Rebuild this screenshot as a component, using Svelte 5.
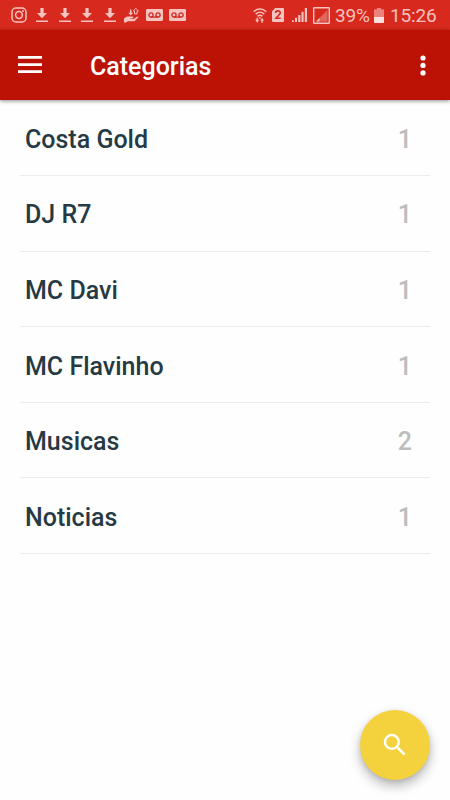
<script>
  const categories = [
    { name: 'Costa Gold', count: 1 },
    { name: 'DJ R7', count: 1 },
    { name: 'MC Davi', count: 1 },
    { name: 'MC Flavinho', count: 1 },
    { name: 'Musicas', count: 2 },
    { name: 'Noticias', count: 1 }
  ];
</script>

<div class="screen">
  <div class="status">
    <div class="notifications">
      <svg class="insta" width="16" height="16" viewBox="0 0 16 16">
        <g fill="none" stroke="currentColor" stroke-width="1.5">
          <rect x="1" y="1" width="14" height="14" rx="4" />
          <circle cx="8" cy="8" r="3.4" />
        </g>
        <circle cx="12" cy="4" r="1" fill="currentColor" />
      </svg>
      {#each [0, 1, 2, 3] as n (n)}
        <svg class="download" width="12" height="14" viewBox="0 0 12 14">
          <path fill="currentColor" d="M4.4 0h3.2v5H11L6 10.3 1 5h3.4zM0 12.4h12V14H0z" />
        </svg>
      {/each}
      <svg class="hand" width="16" height="16" viewBox="0 0 16 16">
        <path fill="currentColor" d="M0 11.4l3-1.8h5.5l1 1-1 1H6.2v.5h3.4L13.3 9.6l1.1.6-4 4H4l-2.2 1.2H0zM5.9 2.6h1.5v3.2h1.8L6.7 8.6 4.2 5.8h1.7z" />
        <path fill="none" stroke="currentColor" stroke-width="1" d="M11.8 1.3l2.6 2.8h-1.3v2.8h-2.6V4.1H9.3z" />
      </svg>
      {#each [0, 1] as n (n)}
        <svg class="voicemail" width="17" height="12" viewBox="0 0 17 12">
          <rect width="17" height="12" rx="1.2" fill="currentColor" />
          <g fill="none" stroke="#c92a20" stroke-width="1.3">
            <circle cx="5" cy="6" r="2.1" />
            <circle cx="12" cy="6" r="2.1" />
            <path d="M5 8.1h7" />
          </g>
        </svg>
      {/each}
    </div>
    <div class="system">
      <svg class="wifi" width="14" height="15" viewBox="0 0 14 15">
        <g fill="none" stroke="currentColor" stroke-width="1.5">
          <path d="M.8 3.8c3.5-3.6 8.9-3.6 12.4 0M2.7 6.2c2.5-2.5 6.1-2.5 8.6 0M4.6 8.4c1.4-1.4 3.4-1.4 4.8 0" />
        </g>
        <path fill="currentColor" d="M7 8.7l1.2 1.2L7 11.1 5.8 9.9zM3.5 9.8h1.4v2h1.3l-2 2.9-2-2.9h1.3zM9.8 14.7H8.4v-2.2H7.1l2-2.6 2 2.6H9.8z" />
      </svg>
      <svg class="sim" width="12" height="14" viewBox="0 0 12 14">
        <path fill="currentColor" d="M3.2 0H11a1 1 0 0 1 1 1v12a1 1 0 0 1-1 1H1a1 1 0 0 1-1-1V3.2z" />
        <path fill="none" stroke="#d7291d" stroke-width="1.6" d="M3.6 5c0-2.8 4.7-2.8 4.7-.2 0 1.9-3 3.4-4.4 5.5h4.8" />
      </svg>
      <svg class="signal" width="15" height="14" viewBox="0 0 15 14">
        <path fill="currentColor" d="M0 12.2h1.8V14H0zM3 9.8h2V14H3zM6.2 7h2.2v7H6.2zM9.5 3.7h2.1V14H9.5zM12.8 0H15v14h-2.2z" />
      </svg>
      <svg class="nosim" width="17" height="17" viewBox="0 0 17 17">
        <rect x=".7" y=".7" width="15.6" height="15.6" rx=".5" fill="none" stroke="currentColor" stroke-width="1.4" />
        <path fill="currentColor" opacity=".4" d="M14.5 3v11.5H3z" />
        <path fill="currentColor" d="M3 14.5l3.5-3.5v3.5z" />
      </svg>
      <span class="percent">39%</span>
      <svg class="battery" width="10" height="15" viewBox="0 0 10 15">
        <path fill="#eb837c" d="M3 0h4v1.2h2.2q.8 0 .8.8v7H0V2q0-.8.8-.8H3z" />
        <path fill="#fbe0de" d="M0 9h10v5.2q0 .8-.8.8H.8q-.8 0-.8-.8z" />
      </svg>
      <span class="clock">15:26</span>
    </div>
  </div>

  <header>
    <button class="menu" aria-label="Menu">
      <svg width="24" height="18" viewBox="0 0 24 18">
        <path fill="#fff" d="M0 .1h24v2.7H0zM0 7.3h24V10H0zM0 14.3h24V17H0z" />
      </svg>
    </button>
    <h1>Categorias</h1>
    <button class="more" aria-label="Mais">
      <svg width="6" height="21" viewBox="0 0 6 21">
        <g fill="#fff">
          <circle cx="3" cy="3" r="2.6" />
          <circle cx="3" cy="10.4" r="2.6" />
          <circle cx="3" cy="17.9" r="2.6" />
        </g>
      </svg>
    </button>
  </header>

  <ul>
    {#each categories as category (category.name)}
      <li>
        <span>{category.name}</span>
        <span class="count">{category.count}</span>
      </li>
    {/each}
  </ul>

  <button class="fab" aria-label="Buscar">
    <svg width="30" height="30" viewBox="0 0 24 24">
      <path fill="#fff" d="M15.5 14h-.79l-.28-.27A6.47 6.47 0 0 0 16 9.5 6.5 6.5 0 1 0 9.5 16c1.61 0 3.09-.59 4.23-1.57l.27.28v.79l5 4.99L20.49 19l-4.99-5zm-6 0C7.01 14 5 11.99 5 9.5S7.01 5 9.5 5 14 7.01 14 9.5 11.99 14 9.5 14z" />
    </svg>
  </button>
</div>

<style>
  .screen {
    position: relative;
    width: 450px;
    height: 800px;
    overflow: hidden;
    background: #fefefe;
    font-family: Roboto, sans-serif;
  }
  svg {
    display: block;
    flex: none;
  }
  button {
    padding: 0;
    border: 0;
    background: none;
  }
  .status {
    display: flex;
    justify-content: space-between;
    box-sizing: border-box;
    height: 30px;
    padding: 0 13px 0 11px;
    background: #d7291d;
    color: #f6c3c0;
  }
  .notifications,
  .system {
    display: flex;
    align-items: center;
  }
  .insta {
    margin-right: 9px;
  }
  .download {
    margin-right: 10.5px;
  }
  .hand {
    margin: 0 6px 0 -2px;
  }
  .voicemail {
    margin-right: 5.5px;
  }
  .wifi {
    margin-right: 5px;
  }
  .sim {
    margin-right: 8px;
  }
  .signal {
    margin-right: 6px;
  }
  .nosim {
    margin-right: 5px;
  }
  .percent,
  .clock {
    font-size: 19px;
    line-height: 30px;
    padding-top: 1px;
  }
  .percent {
    width: 35px;
    margin-right: 4px;
    letter-spacing: -0.2px;
  }
  .battery {
    margin-right: 6px;
  }
  .clock {
    width: 47px;
    letter-spacing: -0.15px;
  }
  header {
    position: relative;
    display: flex;
    align-items: center;
    box-sizing: border-box;
    height: 70px;
    padding: 0 24.5px 0 18px;
    background: #bb1205;
    box-shadow: 0 1px 4px rgba(0, 0, 0, 0.45);
  }
  h1 {
    flex: 1;
    margin: 4px 0 0 48px;
    color: #fff;
    font-size: 25px;
    font-weight: 500;
    line-height: 30px;
  }
  ul {
    margin: 0;
    padding: 0.4px 20px 0;
    list-style: none;
  }
  li {
    display: flex;
    align-items: center;
    justify-content: space-between;
    box-sizing: border-box;
    height: 75.6px;
    padding: 4.4px 18px 0 5px;
    border-bottom: 1px solid #ececec;
    color: #263a44;
    font-size: 25px;
    font-weight: 500;
    line-height: 30px;
  }
  .count {
    color: #bdbdbd;
  }
  .fab {
    position: absolute;
    right: 20px;
    bottom: 20px;
    display: flex;
    align-items: center;
    justify-content: center;
    width: 70px;
    height: 70px;
    border-radius: 50%;
    background: #f4d23e;
    box-shadow: 0 6px 12px rgba(0, 0, 0, 0.28), 0 1px 4px rgba(0, 0, 0, 0.1);
  }
</style>
